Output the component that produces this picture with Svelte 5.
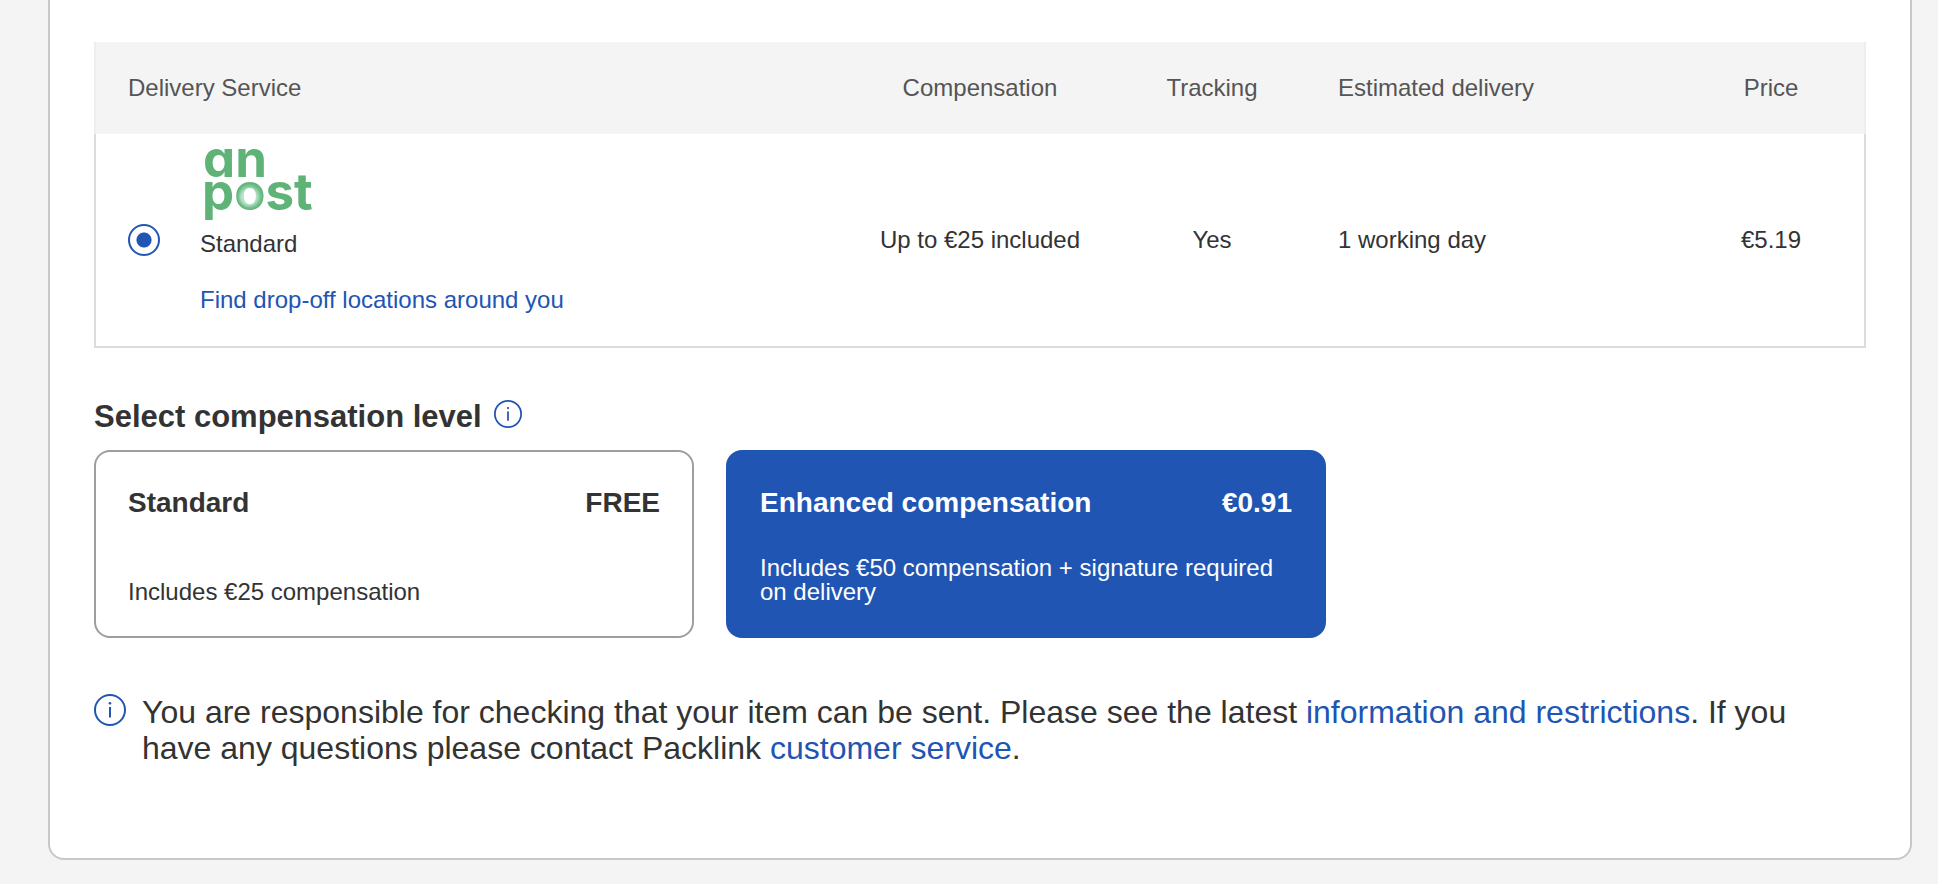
<script lang="ts">
interface Service {
  id: string;
  name: string;
  compensation: string;
  tracking: string;
  estimate: string;
  price: string;
}

interface Level {
  id: string;
  title: string;
  price: string;
  description: string;
}

const services: Service[] = [
  {
    id: 'anpost-standard',
    name: 'Standard',
    compensation: 'Up to €25 included',
    tracking: 'Yes',
    estimate: '1 working day',
    price: '€5.19',
  },
];

const levels: Level[] = [
  { id: 'standard', title: 'Standard', price: 'FREE', description: 'Includes €25 compensation' },
  {
    id: 'enhanced',
    title: 'Enhanced compensation',
    price: '€0.91',
    description: 'Includes €50 compensation + signature required on delivery',
  },
];

let selectedService = $state('anpost-standard');
let selectedLevel = $state('enhanced');
</script>

{#snippet infoIcon()}
  <svg class="info-icon" viewBox="0 0 32 32" aria-hidden="true">
    <circle cx="16" cy="16" r="15" fill="none" stroke="currentColor" stroke-width="2" />
    <circle cx="16" cy="9.2" r="1.3" fill="currentColor" />
    <path d="M16 13v10.6" stroke="currentColor" stroke-width="2" />
  </svg>
{/snippet}

<main class="panel">
  <table class="services">
    <colgroup>
      <col />
      <col class="col-compensation" />
      <col class="col-tracking" />
      <col class="col-estimate" />
      <col class="col-price" />
    </colgroup>
    <thead>
      <tr>
        <th scope="col" class="start">Delivery Service</th>
        <th scope="col">Compensation</th>
        <th scope="col">Tracking</th>
        <th scope="col" class="start">Estimated delivery</th>
        <th scope="col">Price</th>
      </tr>
    </thead>
    <tbody>
      {#each services as service (service.id)}
        <tr>
          <td class="start">
            <div class="service">
              <input
                type="radio"
                id={service.id}
                name="service"
                value={service.id}
                bind:group={selectedService}
              />
              <div class="service-info">
                <svg class="logo" viewBox="0 0 120 72" role="img" aria-label="An Post">
                  <defs>
                    <!-- soft ring on the "o" -->
                    <radialGradient id="ring" gradientUnits="userSpaceOnUse" cx="50" cy="50" r="15" fx="48" fy="52">
                      <stop offset="0.5" stop-color="#b9e2c8" />
                      <stop offset="0.75" stop-color="#74c08c" />
                      <stop offset="0.9" stop-color="#5fb377" />
                      <stop offset="1" stop-color="#8ccba0" />
                    </radialGradient>
                  </defs>
                  <text x="3" y="31">an</text>
                  <text x="2" y="64">p<tspan fill="url(#ring)">o</tspan>st</text>
                </svg>
                <label for={service.id}>{service.name}</label>
                <a href="#locations">Find drop-off locations around you</a>
              </div>
            </div>
          </td>
          <td>{service.compensation}</td>
          <td>{service.tracking}</td>
          <td class="start">{service.estimate}</td>
          <td>{service.price}</td>
        </tr>
      {/each}
    </tbody>
  </table>

  <div class="heading">
    <h2>Select compensation level</h2>
    <button type="button" class="info-button" aria-label="About compensation levels">
      {@render infoIcon()}
    </button>
  </div>

  <div class="levels">
    {#each levels as level (level.id)}
      <button
        type="button"
        class="level"
        class:selected={selectedLevel === level.id}
        aria-pressed={selectedLevel === level.id}
        onclick={() => (selectedLevel = level.id)}
      >
        <span class="level-title">
          <span>{level.title}</span>
          <span>{level.price}</span>
        </span>
        <span class="level-description">{level.description}</span>
      </button>
    {/each}
  </div>

  <div class="note">
    {@render infoIcon()}
    <p>
      You are responsible for checking that your item can be sent. Please see the latest
      <a href="#restrictions">information and restrictions</a>. If you have any questions please
      contact Packlink <a href="#support">customer service</a>.
    </p>
  </div>
</main>

<style>
:global(body) { margin: 0; background: #f4f4f4; }
.panel {
  margin: 0 26px 24px 48px;
  padding: 42px 44px 92px;
  border: 2px solid #c8c8c8;
  border-top: 0;
  border-radius: 0 0 16px 16px;
  background: #fff;
  color: #333;
  font-family: "Helvetica Neue", "Liberation Sans", Arial, sans-serif;
  font-size: 24px;
  line-height: 28px;
}
a { color: #2155b3; text-decoration: none; }
a:hover { text-decoration: underline; }

.services { width: 100%; table-layout: fixed; border-collapse: separate; border-spacing: 0; }
.col-compensation { width: 272px; }
.col-tracking { width: 192px; }
.col-estimate { width: 370px; }
.col-price { width: 188px; }
th { height: 92px; padding: 0; background: #f4f4f4; color: #555; font-weight: 400; text-align: center; }
td { padding: 0; border-bottom: 2px solid #dcdcdc; text-align: center; }
.start { padding-left: 30px; text-align: left; }
th:first-child { padding-left: 32px; border-left: 2px solid #eee; }
th:last-child { border-right: 2px solid #eee; }
td:first-child { padding-left: 32px; border-left: 2px solid #dcdcdc; }
td:last-child { border-right: 2px solid #dcdcdc; }

.service { display: flex; align-items: center; gap: 40px; }
.service input {
  appearance: none;
  flex: none;
  width: 32px;
  height: 32px;
  margin: 0;
  border: 2px solid #2155b3;
  border-radius: 50%;
  background: #fff;
}
.service input:checked { background: radial-gradient(circle, #2155b3 7px, #fff 8px); }
.service-info { display: flex; flex-direction: column; align-items: flex-start; padding: 12px 0 32px; }
.service-info label { margin: 12px 0 28px; }
.logo { display: block; width: 120px; height: 72px; overflow: visible; }
.logo text { fill: #5fb377; font: 700 51px Inter, sans-serif; font-feature-settings: "cv11"; }

.heading { display: flex; align-items: center; gap: 12px; margin: 48px 0 12px; }
h2 { margin: 0; font-size: 31px; line-height: 42px; font-weight: 600; }
.info-icon { display: block; flex: none; width: 32px; height: 32px; color: #2155b3; }
.info-button { align-self: flex-start; margin-top: 4px; padding: 0; border: 0; background: none; cursor: pointer; }
.info-button .info-icon { width: 28px; height: 28px; }

.levels { display: flex; gap: 32px; }
.level {
  display: flex;
  flex: 0 1 600px;
  flex-direction: column;
  justify-content: space-between;
  min-height: 188px;
  padding: 32px;
  border: 2px solid #9e9e9e;
  border-radius: 16px;
  background: #fff;
  color: #333;
  font: inherit;
  text-align: left;
  cursor: pointer;
}
.level.selected { border-color: #2155b3; background: #2155b3; color: #fff; }
.level-title { display: flex; justify-content: space-between; width: 100%; font-size: 28px; line-height: 38px; font-weight: 700; }
.level-description { line-height: 24px; }

.note { display: flex; align-items: flex-start; gap: 16px; margin-top: 56px; padding-right: 32px; }
.note p { margin: 0; font-size: 32px; line-height: 36px; }
</style>
